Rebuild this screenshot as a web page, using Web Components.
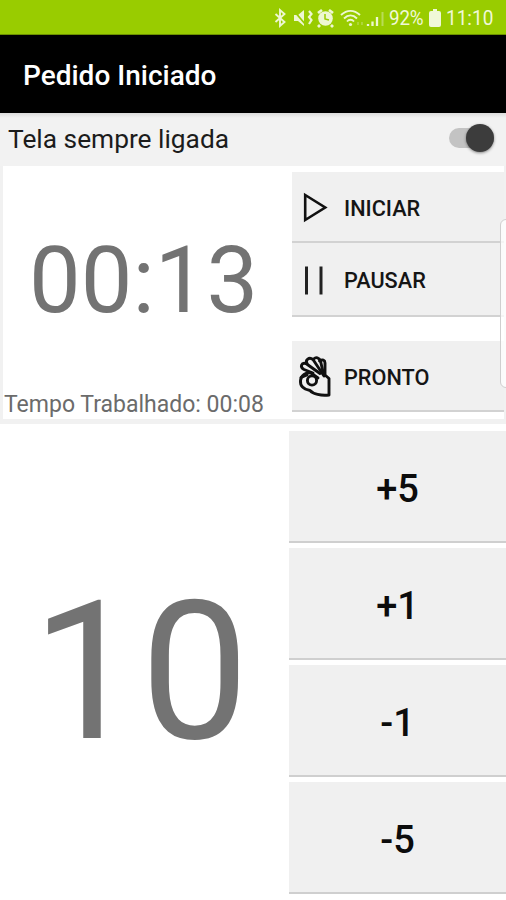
<!DOCTYPE html>
<html lang="pt-BR">
<head>
<meta charset="utf-8">
<title>Pedido Iniciado</title>
<style>
  body {
    margin: 0;
    width: 506px;
    height: 900px;
    overflow: hidden;
    background: #fff;
    font-family: Roboto, "Noto Sans", sans-serif;
  }
</style>
</head>
<body>
<order-screen></order-screen>

<script>
const define = (name, html) => {
  const template = document.createElement("template");
  template.innerHTML = html;
  customElements.define(name, class extends HTMLElement {
    constructor() {
      super();
      this.attachShadow({ mode: "open" }).appendChild(template.content.cloneNode(true));
    }
  });
};

define("status-bar", `
<style>
  :host {
    display: flex;
    align-items: center;
    justify-content: flex-end;
    box-sizing: border-box;
    height: 35px;
    padding-top: 1px;
    padding-right: 13px;
    background: #99cc00;
    border-bottom: 1px solid #6d9100;
    color: #f0f8d8;
    font-size: 20px;
    line-height: 34px;
  }
  svg { display: block; flex: none; }
  span { white-space: nowrap; transform-origin: 0 50%; }
  .level { width: 34px; margin-right: 6px; letter-spacing: -0.2px; transform: scaleX(0.94); }
  .clock { width: 47px; margin-left: 5px; transform: scaleX(0.95); }
</style>
<svg width="115" height="22" viewBox="0 0 115 22" fill="none" stroke="#eef7d2">
  <path d="M1.500 7l9 8-4.500 4V3l4.500 4-9 8" stroke-width="1.9"/>
  <path d="M20 8h4l6-5v16l-6-5h-4z" fill="#eef7d2" stroke="none"/>
  <path d="M20 4l12 14" stroke="#99cc00" stroke-width="1.8"/>
  <path d="M35 4l2.500 3-2.500 3 2.500 3-2.500 4" stroke-width="2.2"/>
  <circle cx="51.500" cy="11.500" r="7.300" fill="#eef7d2" stroke="none"/>
  <path d="M44 6l4-3M59 6l-4-3M46 18l-2 2M57 18l2 2" stroke-width="2.800"/>
  <path d="M51 7v5l4 1" stroke="#99cc00" stroke-width="1.5"/>
  <path d="M67 8c6-5.500 13-5.500 19 0M70 11.500c4-4 9-4 13 0M73 14.500c2-2.300 5-2.300 7 0" stroke-width="1.9"/>
  <circle cx="76.500" cy="17.500" r="1.600" fill="#eef7d2" stroke="none"/>
  <path d="M84 15v3M88 15v3" stroke="#b9dc57" stroke-width="1.3"/>
  <path d="M94 17v2M98.500 14.500V19M103 10v9" stroke-width="2.3"/>
  <path d="M108.500 5v14" stroke="#b9dc57" stroke-width="2"/>
</svg>
<span class="level">92%</span>
<svg width="12" height="18" viewBox="0 0 12 18" fill="#f0f8d8"><path d="M4 0h4v2h2q2 0 2 2v12q0 2-2 2H2q-2 0-2-2V4q0-2 2-2h2z"/></svg>
<span class="clock">11:10</span>
`);

define("app-bar", `
<style>
  :host {
    display: flex;
    align-items: center;
    box-sizing: border-box;
    height: 78px;
    padding-top: 2px;
    padding-left: 23px;
    background: #000;
    color: #fff;
    font-size: 28px;
    font-weight: 500;
  }
</style>
<slot></slot>
`);

define("switch-row", `
<style>
  :host {
    display: flex;
    align-items: center;
    justify-content: space-between;
    box-sizing: border-box;
    height: 53px;
    padding: 0 12px 2px 8px;
    background: linear-gradient(#dcdcdc, #f2f2f2 5px);
    color: #1c1c1c;
    font-size: 26.3px;
    white-space: nowrap;
  }
  .track {
    display: flex;
    align-items: center;
    justify-content: flex-end;
    width: 45px;
    height: 20px;
    margin-top: -2px;
    border-radius: 10px;
    background: #c3c3c3;
  }
  .thumb {
    width: 28px;
    height: 28px;
    flex: none;
    border-radius: 50%;
    background: #3c3c3c;
    box-shadow: 0 1px 3px rgba(0, 0, 0, 0.45);
  }
</style>
<span><slot></slot></span>
<div class="track"><div class="thumb"></div></div>
`);

define("action-button", `
<style>
  :host {
    display: flex;
    align-items: center;
    box-sizing: border-box;
    padding: 3px 0 0 6px;
    gap: 12px;
    background: #f0f0f0;
    border-bottom: 2px solid #d2d2d2;
    color: #151515;
    font-size: 21.7px;
    font-weight: 500;
  }
  .icon { width: 34px; height: 44px; }
</style>
<div class="icon"><slot name="icon"></slot></div>
<slot></slot>
`);

define("step-button", `
<style>
  :host {
    display: flex;
    align-items: center;
    justify-content: center;
    box-sizing: border-box;
    height: 112px;
    padding-top: 6px;
    background: #f0f0f0;
    border-bottom: 2px solid #cfcfcf;
    color: #0c0c0c;
    font-size: 38px;
    font-weight: 500;
  }
</style>
<slot></slot>
`);

define("timer-panel", `
<style>
  :host {
    display: grid;
    grid-template-columns: 289px 1fr;
    box-sizing: border-box;
    height: 258px;
    background: #fff;
    border: solid #f1f1f1;
    border-width: 0 2px 5px 3px;
  }
  .time { display: flex; flex-direction: column; color: #737373; white-space: nowrap; }
  .value { height: 227px; padding-left: 26px; font-size: 92px; line-height: 229px; }
  .worked { padding-left: 1px; font-size: 23px; line-height: 23px; color: #6b6b6b; }
  .actions { display: flex; flex-direction: column; padding-top: 6px; }
  .start { height: 71px; }
  .pause { height: 74px; }
  .done { height: 71px; margin-top: 24px; }
  svg { display: block; }
</style>
<div class="time">
  <div class="value">00:13</div>
  <div class="worked">Tempo Trabalhado: 00:08</div>
</div>
<div class="actions">
  <action-button class="start">
    <svg slot="icon" width="34" height="44" fill="none" stroke="#111" stroke-width="2.6"><path d="M7.200 9v25l20-12.500z"/></svg>
    INICIAR
  </action-button>
  <action-button class="pause">
    <svg slot="icon" width="34" height="44" fill="none" stroke="#222" stroke-width="3"><path d="M8.500 7.500v28M23 7.500v28"/></svg>
    PAUSAR
  </action-button>
  <action-button class="done">
    <svg slot="icon" width="34" height="44" fill="none" stroke="#111" stroke-width="2.9" stroke-linejoin="round" stroke-linecap="round">
      <path d="M15 18L6 14.500C1.500 12 3.500 7 8 8.500l14 10"/>
      <path d="M9 8.500C7 5 11 1.500 15 4.500L26 21"/>
      <path d="M15.500 4.500c2-3.500 6-1.500 7 1.500l3 13"/>
      <path d="M21.500 6c3-2 5.500-1 5.500 2v12l4 3.500V40c-8 1-16-1-19-4.500C5 34 2 30 2.500 25.500 3 20.500 8 17 13 18l7 5"/>
      <path d="M3 22.500l6-2.500"/>
      <circle cx="14" cy="25.500" r="4.600"/>
    </svg>
    PRONTO
  </action-button>
</div>
`);

define("counter-panel", `
<style>
  :host {
    display: grid;
    grid-template-columns: 289px 1fr;
    height: 476px;
    background: #fff;
  }
  .count {
    padding-left: 32px;
    font-size: 193px;
    line-height: 496px;
    color: #737373;
    white-space: nowrap;
  }
  .steps { display: flex; flex-direction: column; gap: 5px; padding-top: 7px; }
</style>
<div class="count">10</div>
<div class="steps">
  <step-button>+5</step-button>
  <step-button>+1</step-button>
  <step-button>-1</step-button>
  <step-button>-5</step-button>
</div>
`);

define("order-screen", `
<style>
  :host { display: block; position: relative; height: 900px; overflow: hidden; }
  /* edge panel handle, floats over the right side */
  .edge {
    position: absolute;
    top: 219px;
    right: -6px;
    width: 12px;
    height: 169px;
    box-sizing: border-box;
    border: 1px solid #cfcfcf;
    border-radius: 6px;
    background: rgba(255, 255, 255, 0.75);
  }
</style>
<status-bar></status-bar>
<app-bar>Pedido Iniciado</app-bar>
<switch-row>Tela sempre ligada</switch-row>
<timer-panel></timer-panel>
<counter-panel></counter-panel>
<div class="edge"></div>
`);
</script>
</body>
</html>
